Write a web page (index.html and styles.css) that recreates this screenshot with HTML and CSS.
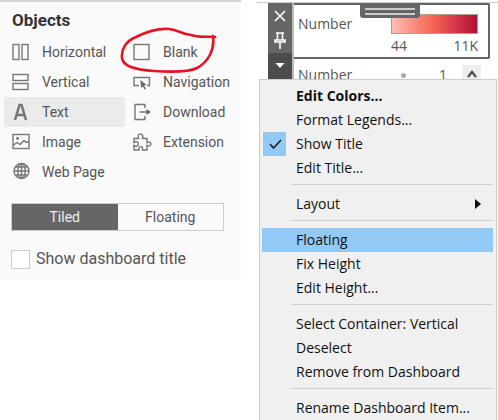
FILE: index.html
```html
<!DOCTYPE html>
<html lang="en">
<head>
<meta charset="utf-8">
<title>Dashboard objects</title>
<link rel="stylesheet" href="styles.css">
</head>
<body>
<main class="workspace">
  <section class="objects">
    <h2 class="objects-title">Objects</h2>
    <div class="object-grid">
      <button class="object"><svg class="icon" viewBox="0 0 18 18"><rect x="1" y="1.5" width="6" height="15"/><rect x="10" y="1.5" width="6" height="15"/></svg>Horizontal</button>
      <button class="object"><svg class="icon" viewBox="0 0 18 18"><rect x="1" y="1.5" width="15" height="6"/><rect x="1" y="10.5" width="15" height="6"/></svg>Vertical</button>
      <button class="object selected"><svg class="icon letter" viewBox="0 0 18 18"><path d="M3 17 7.500 2h2L14 17M5 12h7"/></svg>Text</button>
      <button class="object"><svg class="icon" viewBox="0 0 18 18"><rect x="1" y="1.500" width="16" height="14"/><path d="m1 12.500 4-3 3 2 4-4 2 2 3-1"/><circle class="solid" cx="5.500" cy="5.500" r=".7"/></svg>Image</button>
      <button class="object"><svg class="icon" viewBox="0 0 18 18"><circle cx="9.500" cy="8" r="7.500"/><ellipse cx="9.500" cy="8" rx="3.700" ry="7.500"/><path d="M9.500.5v15M2 8h15M3.300 4h12.400M3.300 12h12.400"/></svg>Web Page</button>
      <button class="object"><svg class="icon" viewBox="0 0 18 18"><rect x="1" y="1.500" width="15" height="15"/></svg>Blank</button>
      <button class="object"><svg class="icon" viewBox="0 0 18 18"><path d="M6 12.500H1v-8h15.500v8H14"/><path class="solid thin" d="m7.500 7 6 5-2.500.5 2 3.200-1.500.8-1.700-3.300-1.800 1.700z"/></svg>Navigation</button>
      <button class="object"><svg class="icon" viewBox="0 0 18 18"><path d="M12 5V1.500H2v15h10V13M6.500 9H15"/><path class="solid thin" d="m13.500 6 4.500 3-4.500 3z"/></svg>Download</button>
      <button class="object"><svg class="icon" viewBox="0 0 18 18"><path d="M1 5.500h4.500V4.700C4.500 3 5.500 1 7.500 1s3 2 2 3.700v.8H14v4c1-1 4-.5 4 1.500s-3 2.500-4 1.500V17H9.500v-1.500c.7-2.500-4-2.500-3.500 0V17H1v-4.500c1.500 1.500 4.500.5 4.500-1.500S2.500 8 1 9.500z"/></svg>Extension</button>
    </div>
    <div class="segmented">
      <button class="segment active">Tiled</button>
      <button class="segment">Floating</button>
    </div>
    <label class="show-title"><input type="checkbox">Show dashboard title</label>
    <svg class="annotation" viewBox="0 0 100 50"><path d="M95 13C86 12 80 14 71 11 61 10 59 6 49 5 36 4 24 9 16 13 6 17 1 25 2 34c1 9 15 12 32 13 15 1 35 1 43-3C88 38 95 26 93 12"/></svg>
  </section>

  <section class="view">
    <div class="legend">
      <div class="tools">
        <button class="tool" aria-label="Remove"><svg class="tool-icon" viewBox="0 0 14 14"><path d="m2 2 10 10M12 2 2 12"/></svg></button>
        <button class="tool" aria-label="Pin"><svg class="tool-icon tall" viewBox="0 0 14 18"><path d="M3 1h8M4.500 1v7M9.500 1v7M2 10V8h10v2zM7 10v7"/></svg></button>
        <button class="tool dark" aria-label="More options"><svg class="tool-icon" viewBox="0 0 14 14"><path class="arrow" d="M2.500 4h9L7 9z"/></svg></button>
      </div>
      <div class="cards">
        <div class="card">
          <span class="card-title">Number</span>
          <div class="scale">
            <div class="ramp"></div>
            <div class="range"><span>44</span><span>11K</span></div>
          </div>
          <div class="handle"></div>
        </div>
        <div class="size-card">
          <span class="card-title">Number</span>
          <span class="dot"></span>
          <span class="size">1</span>
          <button class="scroll-up" aria-label="Scroll up"><svg class="tool-icon" viewBox="0 0 14 14"><path d="m3 9 4-5 4 5"/></svg></button>
        </div>
      </div>
    </div>
    <div class="menu">
      <button class="item strong">Edit Colors...</button>
      <button class="item">Format Legends...</button>
      <button class="item"><span class="check"><svg class="tool-icon" viewBox="0 0 14 14"><path d="m2 7 3.500 4L13 3"/></svg></span>Show Title</button>
      <button class="item">Edit Title...</button>
      <hr class="rule">
      <button class="item">Layout<svg class="submenu" viewBox="0 0 6 10"><path d="m0 0 6 5-6 5z"/></svg></button>
      <hr class="rule">
      <button class="item highlighted">Floating</button>
      <button class="item">Fix Height</button>
      <button class="item">Edit Height...</button>
      <hr class="rule">
      <button class="item">Select Container: Vertical</button>
      <button class="item">Deselect</button>
      <button class="item">Remove from Dashboard</button>
      <hr class="rule">
      <button class="item">Rename Dashboard Item...</button>
    </div>
  </section>
</main>
</body>
</html>
```
FILE: styles.css
```css
* { box-sizing: border-box; }

body {
  margin: 0;
  background: #fff;
  color: #555;
  font: 14px/20px "Open Sans", "Noto Sans", sans-serif;
}

button {
  border: 0;
  padding: 0;
  background: none;
  color: inherit;
  font: inherit;
  text-align: left;
}

.workspace {
  display: grid;
  grid-template-columns: 241fr 241fr;
  gap: 16px;
  align-items: start;
}

/* Objects pane */
.objects {
  position: relative;
  padding: 8px 0 11px 4px;
  border-top: 2px solid #d4d4d4;
  background: #fafafa;
  font-family: Roboto, sans-serif;
}

.objects-title {
  margin: 0 0 7px 8px;
  color: #333;
  font-size: 17px;
  line-height: 20px;
}

.object-grid {
  display: grid;
  grid-template: repeat(5, 30px) / 121px 1fr;
  grid-auto-flow: column;
}

.object {
  display: flex;
  align-items: center;
  gap: 12px;
  padding-left: 8px;
}

.selected { background: #ebebeb; }

.icon {
  width: 18px;
  height: 18px;
  flex: none;
  overflow: visible;
  fill: none;
  stroke: #777;
  stroke-width: 1.4;
}

.letter { stroke-width: 2.6; }
.solid { fill: #666; }
.thin { stroke: none; }

.segmented {
  display: flex;
  margin: 16px 17px 0 7px;
  border: 1px solid #ccc;
}

.segment {
  flex: 1;
  height: 26px;
  text-align: center;
}

.active {
  background: #666;
  color: #eee;
}

.show-title {
  display: flex;
  align-items: center;
  gap: 6px;
  margin: 18px 0 0 7px;
  font-size: 16px;
}

.show-title input {
  appearance: none;
  width: 19px;
  height: 19px;
  margin: 0;
  border: 1px solid #ccc;
  background: #fff;
}

.annotation {
  position: absolute;
  left: 120px;
  top: 22px;
  width: 100px;
  height: 50px;
  fill: none;
  stroke: #e81123;
  stroke-width: 2.6;
  stroke-linejoin: round;
  stroke-linecap: round;
  pointer-events: none;
}

/* Legend */
.view {
  position: relative;
  min-height: 100vh;
  padding-top: 2px;
}

.legend {
  display: flex;
  padding: 0 8px 0 11px;
  border-top: 1px solid #ccc;
}

.tools {
  display: flex;
  flex-direction: column;
  width: 26px;
  border-right: 2px solid #bbb;
  background: #666;
}

.tool {
  display: flex;
  align-items: center;
  justify-content: center;
  height: 25px;
}

.dark {
  flex: 1;
  background: #4c4c4c;
}

.tool-icon {
  width: 14px;
  height: 14px;
  fill: none;
  stroke: #fff;
  stroke-width: 1.6;
}

.tall { height: 18px; }
.arrow { fill: #fff; stroke: none; }

.cards { flex: 1; }

.card {
  position: relative;
  display: flex;
  justify-content: space-between;
  height: 56px;
  padding: 9px 10px 0 4px;
  border: 2px solid #666;
  border-left: 0;
  border-radius: 0 2px 2px 0;
}

.scale { width: 87px; }

.ramp {
  height: 20px;
  border: 1px solid #aaa090;
  background: linear-gradient(90deg, #ffbeb2, #f26250 50%, #d63447 75%, #ae123a);
}

.range {
  display: flex;
  justify-content: space-between;
  line-height: 24px;
}

.handle {
  position: absolute;
  left: 66px;
  top: -2px;
  width: 60px;
  height: 15px;
  border: solid #666;
  border-width: 5px 5px 3px;
  border-radius: 0 0 3px 3px;
  background: linear-gradient(#ccc 2px, #666 2px, #666 5px, #ccc 5px);
}

.size-card {
  display: flex;
  align-items: center;
  height: 20px;
  padding: 12px 9px 0 4px;
}

.dot {
  width: 5px;
  height: 5px;
  margin-left: auto;
  border-radius: 50%;
  background: #aaa;
}

.size { margin: 0 15px 0 33px; }

.scroll-up {
  display: flex;
  justify-content: center;
  width: 19px;
  height: 20px;
  padding-top: 3px;
  background: #eee;
}

.scroll-up .tool-icon {
  stroke: #555;
  stroke-width: 2.4;
}

/* Context menu */
.menu {
  position: absolute;
  inset: 79px 1px auto 2px;
  display: flex;
  flex-direction: column;
  min-height: calc(100vh - 79px);
  padding: 4px 3px 0 2px;
  border: 1px solid #ccc;
  border-bottom: 0;
  background: #f0f0f0;
  color: #111;
}

.item {
  position: relative;
  display: flex;
  align-items: center;
  justify-content: space-between;
  height: 24px;
  padding: 0 12px 0 34px;
}

.strong { font-weight: 700; }
.highlighted { background: #91c9f7; }

.check {
  position: absolute;
  left: 1px;
  top: 0;
  display: flex;
  align-items: center;
  justify-content: center;
  width: 23px;
  height: 24px;
  background: #91c9f7;
}

.check .tool-icon { stroke: #222; }

.submenu {
  width: 6px;
  height: 10px;
  fill: #111;
}

.rule {
  width: calc(100% - 29px);
  height: 1px;
  margin: 4px 0 7px 29px;
  border: 0;
  background: #d0d0d0;
}
```
